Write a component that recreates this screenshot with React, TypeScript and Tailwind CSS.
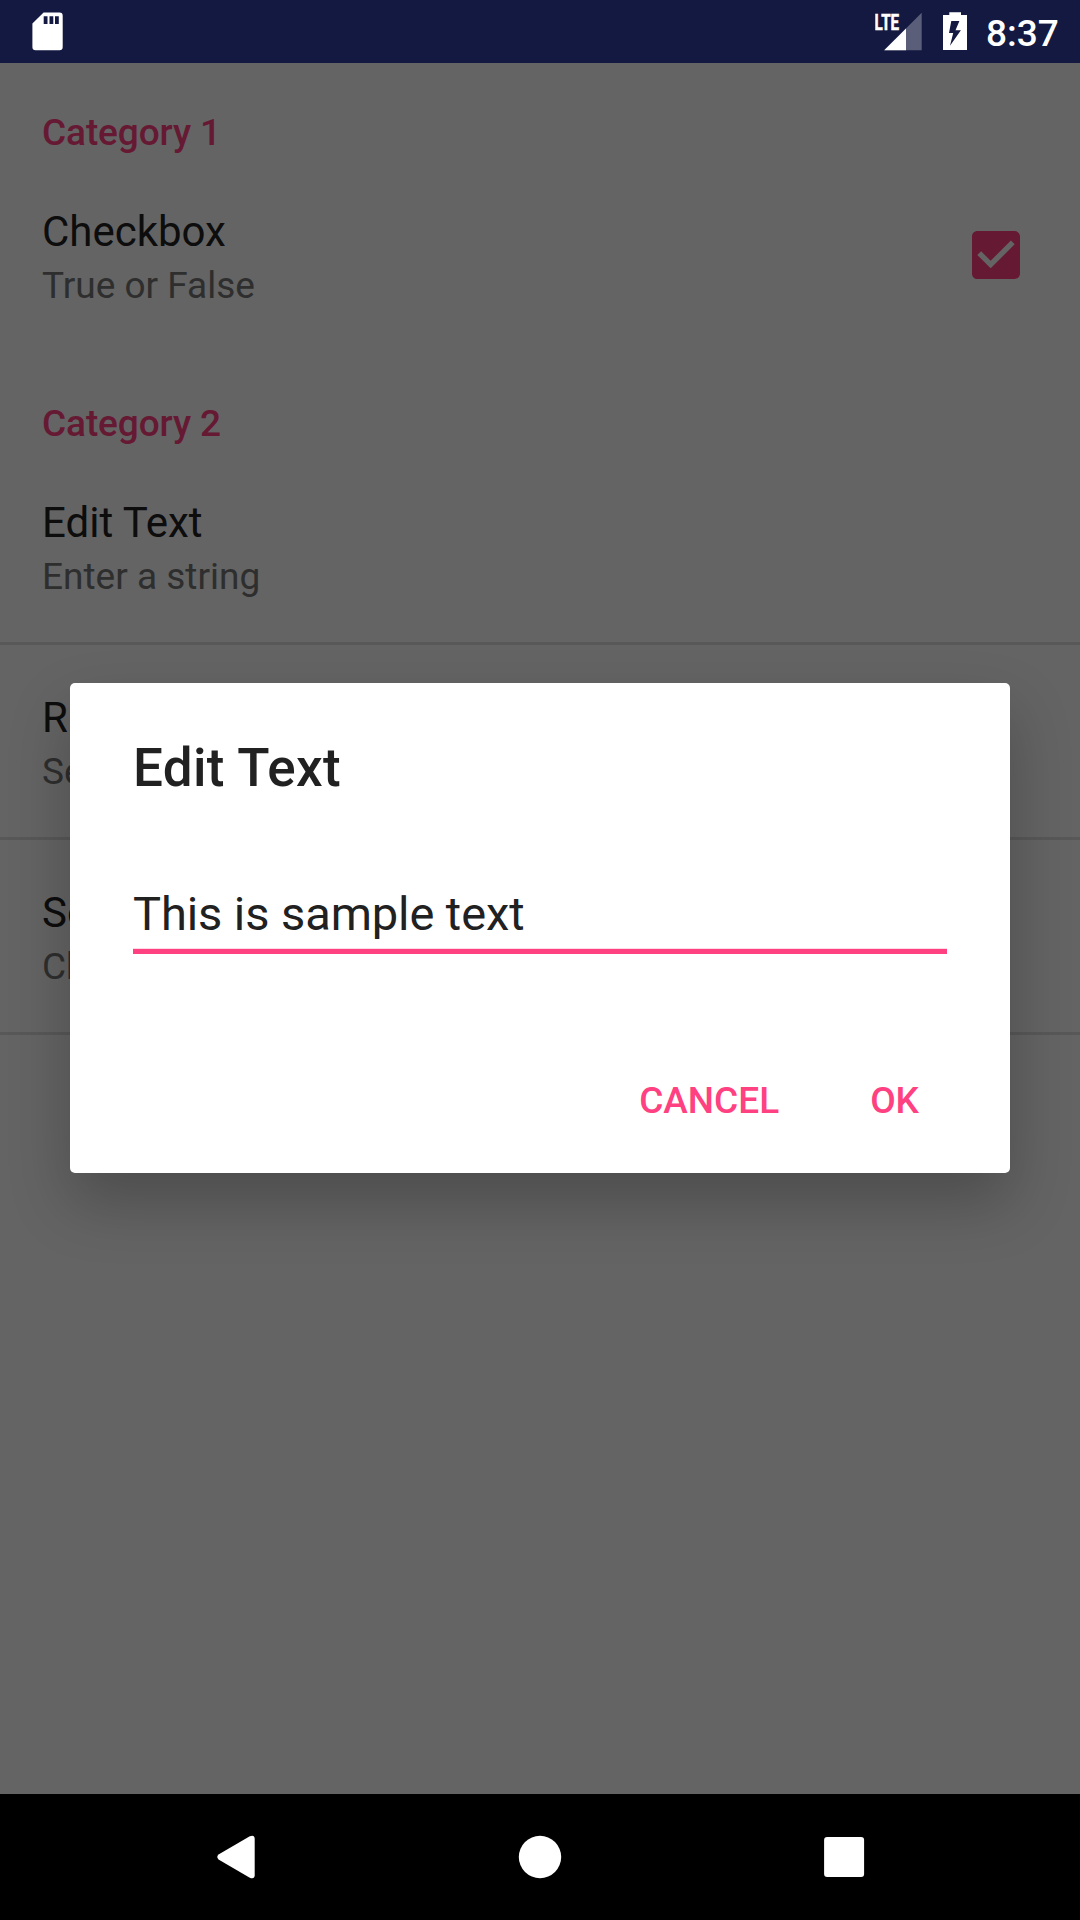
import React from "react";

function SdCardIcon() {
  return (
    <svg className="block h-[63px] w-[64px]" viewBox="0 0 64 63" fill="#fff">
      <path
        fillRule="evenodd"
        d="M43.6 12.5H59.5a3.2 3.2 0 0 1 3.2 3.2V47.1a3.2 3.2 0 0 1-3.2 3.2H35.6a3.2 3.2 0 0 1-3.2-3.2V23.6zM43.7 16.3v7.6h3.8v-7.6zM49.5 16.3v7.6h3.8v-7.6zM55 16.3v7.6h3.8v-7.6z"
      />
    </svg>
  );
}

function SignalIcon() {
  return (
    <svg className="block h-[63px] w-[48px]" viewBox="875 0 48 63" fill="#fff">
      <path d="M921.7 12.8V50.3H884.2z" fillOpacity="0.3" />
      <path d="M906 28.5V50.3H884.2z" />
      <text
        x="874.6"
        y="29.8"
        fontFamily="Roboto, sans-serif"
        fontWeight="700"
        fontSize="22.5"
        textLength="24.5"
        lengthAdjust="spacingAndGlyphs"
        stroke="#fff"
        strokeWidth="0.6"
      >
        LTE
      </text>
    </svg>
  );
}

function BatteryIcon() {
  return (
    <svg className="block h-[63px] w-[24px]" viewBox="943 0 24 63" fill="#fff">
      <path
        fillRule="evenodd"
        d="M949.3 12.3H961V15H967V50H943V15H949.3zM951.3 20.9L949 33.1H953.2L950 45.7L960.9 30.3H955.5L959.4 20.9z"
      />
    </svg>
  );
}

function StatusBar() {
  return (
    <header className="flex h-[63px] items-center justify-between bg-[#131940]">
      <SdCardIcon />
      <div className="flex w-[205px] items-center">
        <SignalIcon />
        <div className="w-5" />
        <BatteryIcon />
        <span className="pt-[3px] pl-[19px] text-[37px] leading-[43px] font-medium text-white">8:37</span>
      </div>
    </header>
  );
}

function Category({ title }: { title: string }) {
  return (
    <h2 className="px-[42px] pt-12 pb-[5px] text-[37px] leading-[43px] font-medium tracking-[-0.1px] text-[#ff4081]">
      {title}
    </h2>
  );
}

function Preference({ title, summary, children }: { title: string; summary: string; children?: React.ReactNode }) {
  return (
    <div className="flex h-48 items-center justify-between pr-[52px] pl-[42px]">
      <div className="flex flex-col gap-2 pt-1">
        <div className="text-[42px] leading-[49px] text-[#212121]">{title}</div>
        <div className="text-[37px] leading-[43px] text-[#737373]">{summary}</div>
      </div>
      {children}
    </div>
  );
}

function Divider() {
  return <div className="h-[3px] bg-[#dcdcdc]" />;
}

function Dialog() {
  return (
    <div className="flex h-[490px] w-[940px] flex-col rounded-[5px] bg-white px-[63px] pt-[54px] shadow-[0_29px_62px_rgba(0,0,0,0.24)]">
      <h1 className="text-[53px] leading-[62px] font-medium tracking-[0.35px] text-[#212121]">Edit Text</h1>
      <div className="mt-[87px] pb-[6px] text-[47px] leading-[56px] tracking-[-0.08px] text-[#212121]">
        This is sample text
      </div>
      <div className="h-[6px] border-t border-[#ffd9e6] bg-[#ff4081]" />
      <div className="mt-[125px] flex justify-end gap-[91px] pr-[28px] text-[37px] leading-[43px] font-medium text-[#ff4081]">
        <button>CANCEL</button>
        <button>OK</button>
      </div>
    </div>
  );
}

function NavBar() {
  return (
    <nav className="flex h-[126px] items-center bg-black">
      <svg className="block h-[126px] w-[1080px]" viewBox="0 1794 1080 126" fill="#fff">
        <path d="M218.5 1854.6L249.8 1836.3Q254.5 1834.4 254.7 1838.7V1875.3Q254.5 1879.6 249.8 1877.7L218.5 1859.4Q216 1857 218.5 1854.6z" />
        <circle cx="540" cy="1857" r="21.2" />
        <rect x="824.1" y="1837.1" width="40" height="39.8" rx="3" />
      </svg>
    </nav>
  );
}

export default function App() {
  return (
    <div className="flex h-[1920px] w-[1080px] flex-col overflow-hidden font-[Roboto,sans-serif]">
      <StatusBar />
      <main className="relative h-[1731px] overflow-hidden bg-[#fafafa]">
        <Category title="Category 1" />
        <Preference title="Checkbox" summary="True or False">
          <svg className="block size-16" viewBox="0 0 24 24" fill="#ff4081">
            <path d="M19 3H5c-1.11 0-2 .9-2 2v14c0 1.1.89 2 2 2h14c1.11 0 2-.9 2-2V5c0-1.1-.89-2-2-2zm-9 14l-5-5 1.41-1.41L10 14.17l7.59-7.59L19 8l-9 9z" />
          </svg>
        </Preference>
        <div className="h-[3px]" />
        <Category title="Category 2" />
        <Preference title="Edit Text" summary="Enter a string" />
        <Divider />
        <Preference title="R" summary="Se" />
        <Divider />
        <Preference title="Se" summary="Ch" />
        <Divider />
        <div className="absolute inset-0 flex items-start justify-center bg-black/60 pt-[620px]">
          <Dialog />
        </div>
      </main>
      <NavBar />
    </div>
  );
}
